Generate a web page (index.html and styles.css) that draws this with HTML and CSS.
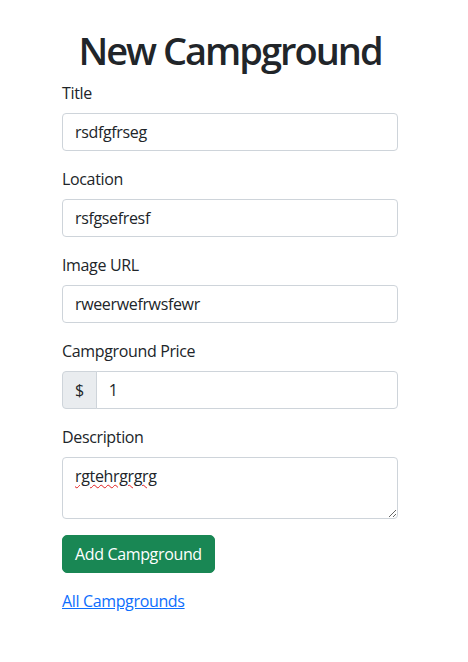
FILE: index.html
```html
<!DOCTYPE html>
<html lang="en">
<head>
<meta charset="utf-8">
<title>New Campground</title>
<link rel="stylesheet" href="styles.css">
</head>
<body>
<main class="container">
  <h1 class="page-title">New Campground</h1>
  <form class="form">
    <div class="field">
      <label class="form-label" for="title">Title</label>
      <input class="form-control" id="title" type="text" value="rsdfgfrseg">
    </div>
    <div class="field">
      <label class="form-label" for="location">Location</label>
      <input class="form-control" id="location" type="text" value="rsfgsefresf">
    </div>
    <div class="field">
      <label class="form-label" for="image">Image URL</label>
      <input class="form-control" id="image" type="text" value="rweerwefrwsfewr">
    </div>
    <div class="field">
      <label class="form-label" for="price">Campground Price</label>
      <div class="input-group">
        <span class="input-group-text">$</span>
        <input class="form-control group-control" id="price" type="text" value="1">
      </div>
    </div>
    <div class="field">
      <label class="form-label" for="description">Description</label>
      <div class="form-control textarea" id="description"><span class="misspelled">rgtehrgrgrg</span></div>
    </div>
    <div class="field">
      <button class="btn-success" type="button">Add Campground</button>
    </div>
  </form>
  <a class="back-link" href="#">All Campgrounds</a>
</main>
</body>
</html>
```
FILE: styles.css
```css
* { box-sizing: border-box; }
html, body { margin: 0; padding: 0; background: #fff; }
body {
  font-family: "Open Sans", "Noto Sans", "Liberation Sans", sans-serif;
  font-size: 16px;
  line-height: 1.5;
  letter-spacing: -0.35px;
  color: #212529;
}
.container {
  width: 336px;
  margin-left: 62px;
  padding-top: 25px;
}
.page-title {
  margin: 0 0 8px 0;
  font-size: 38px;
  font-weight: 600;
  line-height: 1.2;
  letter-spacing: -2px;
  text-align: center;
  white-space: nowrap;
  padding-top: 3px;
  height: 48px;
}
.form { margin: 0; }
.field { margin-bottom: 16px; }
.form-label {
  display: block;
  margin-bottom: 8px;
}
.form-control {
  display: block;
  width: 100%;
  height: 38px;
  padding: 6px 12px;
  font: inherit;
  letter-spacing: inherit;
  color: #212529;
  background: #fff;
  border: 1px solid #ced4da;
  border-radius: 4px;
  outline: none;
}
.input-group { display: flex; }
.input-group-text {
  display: flex;
  align-items: center;
  padding: 6px 12px;
  background: #e9ecef;
  border: 1px solid #ced4da;
  border-radius: 4px 0 0 4px;
  height: 38px;
}
.group-control {
  flex: 1;
  margin-left: -1px;
  border-radius: 0 4px 4px 0;
}
.textarea {
  height: 62px;
  resize: vertical;
  overflow: auto;
}
.misspelled {
  text-decoration: underline wavy #e02020;
  text-decoration-thickness: 1px;
  text-underline-offset: 2px;
}
.btn-success {
  display: inline-block;
  height: 38px;
  padding: 6px 12px;
  font: inherit;
  letter-spacing: inherit;
  color: #fff;
  background: #198754;
  border: 1px solid #198754;
  border-radius: 5px;
  cursor: pointer;
}
.back-link {
  color: #0d6efd;
  text-decoration: underline;
}
```
